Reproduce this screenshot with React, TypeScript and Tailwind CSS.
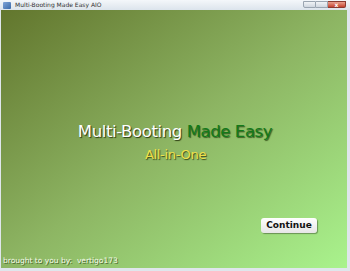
export default function App() {
  return (
    <div className="flex h-[271px] w-[350px] flex-col overflow-hidden bg-[#dfe6ec] font-['DejaVu_Sans',sans-serif]">
      {/* title bar */}
      <div className="flex h-[10px] items-center bg-gradient-to-b from-[#f4f7fa] to-[#dce4ec] pl-[3px]">
        <div className="h-[7px] w-[8px] rounded-[1px] bg-gradient-to-br from-[#7fa4d8] to-[#3a6aa8]" />
        <span className="ml-[4px] text-[6px] leading-none text-[#333]">Multi-Booting Made Easy AIO</span>
        <div className="ml-auto mr-[4px] flex h-[8px] items-start">
          <div className="h-[7px] w-[13px] rounded-bl-[2px] border border-[#9aa5b1] bg-gradient-to-b from-[#f0f3f6] to-[#cfd7df]" />
          <div className="h-[7px] w-[12px] border-y border-r border-[#9aa5b1] bg-gradient-to-b from-[#f0f3f6] to-[#cfd7df]" />
          <div className="flex h-[7px] w-[18px] items-center justify-center rounded-br-[2px] border-y border-r border-[#8a3a30] bg-gradient-to-b from-[#e9a08f] to-[#c4412e] text-[6px] font-bold leading-none text-white">
            x
          </div>
        </div>
      </div>
      {/* content */}
      <div className="ml-[1px] mr-[3px] flex flex-1 flex-col bg-gradient-to-br from-[#62762d] via-[#8db563] to-[#a9f38d]">
        <div className="flex flex-1 flex-col items-center pt-[112px]">
          <div className="ml-[2px] text-[16.5px] leading-[20px] tracking-[-0.4px] [text-shadow:1px_1px_1px_#2a3a10]">
            <span className="text-white">Multi-Booting </span>
            <span className="text-[#137a1a] [text-shadow:1px_1px_1px_#3c5a20]">Made Easy</span>
          </div>
          <div className="ml-[3px] mt-[5px] text-[13px] leading-[15px] tracking-[-0.3px] text-[#eee04a] [text-shadow:1px_1px_1px_#3a4a1a]">
            All-in-One
          </div>
        </div>
        <div className="flex justify-end pr-[30px]">
          <button className="h-[15px] w-[56px] rounded-[3px] bg-gradient-to-b from-white to-[#e6e6e6] text-[9px] font-bold leading-none text-[#111] shadow-[1px_1px_1px_rgba(0,0,0,0.35)]">
            Continue
          </button>
        </div>
        <div className="pb-[3px] pl-[2px] pt-[23px] text-[7.5px] leading-[9px] text-[#f4fbe8] [text-shadow:1px_1px_0_#4a6a30]">
          brought to you by:&nbsp;&nbsp;vertigo173
        </div>
      </div>
      <div className="h-[3px]" />
    </div>
  );
}
